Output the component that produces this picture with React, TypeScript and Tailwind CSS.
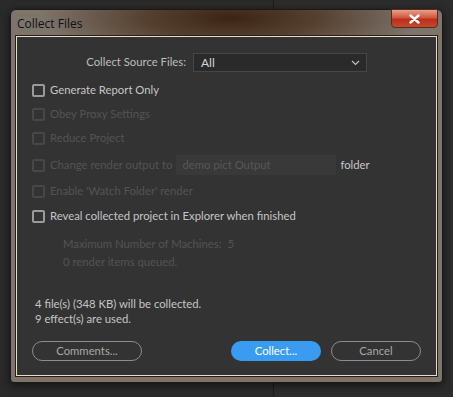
import React from 'react';

const CheckRow: React.FC<{ label: string; disabled?: boolean; className?: string; children?: React.ReactNode }> = ({
  label,
  disabled,
  className,
  children,
}) => (
  <div className={`flex items-center ${className ?? ''}`}>
    <span
      className={`w-[13px] h-[13px] rounded-[2px] border-2 shrink-0 ${
        disabled ? 'border-[#474747]' : 'border-[#9a9a9a]'
      }`}
    />
    <span className={`ml-[5px] ${disabled ? 'text-[#545454]' : 'text-[#c6c6c6]'}`}>{label}</span>
    {children}
  </div>
);

const App: React.FC = () => {
  return (
    <div className="relative w-[453px] h-[397px] overflow-hidden bg-[#2a2a2a] font-['Lato',sans-serif] text-[11.3px]">
      {/* Background behind the dialog */}
      <div className="flex h-full">
        <div className="w-[274px] h-full border-r border-[#1b1b1b]" />
        <div className="flex-1 h-full bg-[#2c2c2c]" />
      </div>

      {/* Dialog window */}
      <div className="absolute left-[10px] top-[9px] w-[433px] h-[374px] rounded-t-[6px] rounded-b-[4px] border border-[#1a1a1a] bg-[radial-gradient(ellipse_190px_45px_at_220px_8px,#3b2414_0%,#55402f_45%,#7d746c_100%)] shadow-[0_2px_8px_rgba(0,0,0,0.6)] flex flex-col">
        {/* Title bar */}
        <div className="h-[26px] flex items-start shrink-0">
          <span className="ml-[6px] mt-[8px] text-[12px] leading-none text-[#111] font-['Open_Sans',sans-serif]">Collect Files</span>
          <div className="ml-auto mr-[4px] w-[47px] h-[19px] -mt-px rounded-b-[4px] border border-[#5a2a22] bg-[linear-gradient(#e8a08c_0%,#d2573c_45%,#b8301c_55%,#c8482c_100%)] flex items-center justify-center">
            <svg width="11" height="10" viewBox="0 0 11 10">
              <path d="M1.5 1.5 L9.5 8.5 M9.5 1.5 L1.5 8.5" stroke="#fff" strokeWidth="2.4" strokeLinecap="round" />
            </svg>
          </div>
        </div>

        {/* Content panel */}
        <div className="mx-[5px] flex-1 border border-[#e8dccb] bg-[#333333] outline outline-[#2a1d15]">
          <div className="h-full flex flex-col pl-[15px] pr-[15px] pt-[16px]">
            <div className="flex items-center h-[19px]">
              <span className="w-[161px] text-right text-[#bdbdbd] pr-[7px]">Collect Source Files:</span>
              <div className="w-[174px] h-[19px] bg-[#2a2a2a] border border-[#474747] flex items-center pl-[7px] pr-[6px]">
                <span className="text-[#d4d4d4] text-[12px]">All</span>
                <svg className="ml-auto" width="9" height="6" viewBox="0 0 9 6">
                  <path d="M1 1 L4.5 4.5 L8 1" stroke="#c0c0c0" strokeWidth="1.2" fill="none" />
                </svg>
              </div>
            </div>

            <CheckRow label="Generate Report Only" className="mt-[9px] h-[19px]" />
            <CheckRow label="Obey Proxy Settings" disabled className="mt-[5px] h-[19px]" />
            <CheckRow label="Reduce Project" disabled className="mt-[5px] h-[19px]" />
            <CheckRow label="Change render output to" disabled className="mt-[7px] h-[20px]">
              <div className="ml-[4px] w-[160px] h-[20px] bg-[#393939] flex items-center pl-[6px] text-[#575757]">
                demo pict Output
              </div>
              <span className="ml-[4px] text-[#c6c6c6]">folder</span>
            </CheckRow>
            <CheckRow label="Enable 'Watch Folder' render" disabled className="mt-[7px] h-[19px]" />
            <CheckRow label="Reveal collected project in Explorer when finished" className="mt-[6px] h-[19px]" />

            <div className="mt-[9px] ml-[31px] text-[#545454] flex flex-col">
              <span className="h-[18px] leading-[18px]">
                Maximum Number of Machines:<span className="ml-[6px]">5</span>
              </span>
              <span className="h-[18px] leading-[18px]">0 render items queued.</span>
            </div>

            <div className="mt-[25px] ml-[3px] text-[#c6c6c6] flex flex-col">
              <span className="h-[15px] leading-[15px]">4 file(s) (348 KB) will be collected.</span>
              <span className="h-[15px] leading-[15px]">9 effect(s) are used.</span>
            </div>

            <div className="mt-[15px] flex items-center h-[20px]">
              <button className="w-[110px] h-[20px] rounded-full border border-[#8c8c8c] text-[#a8a8a8] leading-none">
                Comments...
              </button>
              <button className="ml-auto w-[90px] h-[20px] rounded-full bg-[#3a9cf0] text-white leading-none">
                Collect...
              </button>
              <button className="ml-[10px] w-[90px] h-[20px] rounded-full border border-[#8c8c8c] text-[#a8a8a8] leading-none">
                Cancel
              </button>
            </div>
          </div>
        </div>
        <div className="h-[6px] shrink-0" />
      </div>
    </div>
  );
};

export default App;
